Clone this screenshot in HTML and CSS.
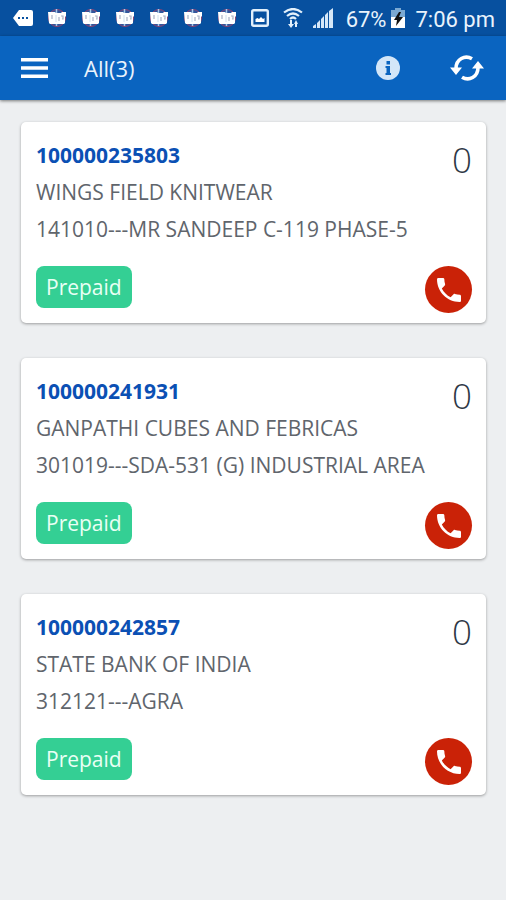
FILE: index.html
```html
<!DOCTYPE html>
<html lang="en">
<head>
<meta charset="utf-8">
<meta name="viewport" content="width=device-width, initial-scale=1">
<title>All(3)</title>
<link rel="stylesheet" href="styles.css">
</head>
<body>
<svg class="sprite" aria-hidden="true">
  <symbol id="notice" viewBox="0 0 20 20">
    <circle cx="10" cy="10" r="8.500" fill="#31569c" stroke="#94426f" stroke-width="1"/>
    <path d="M9.500 1v17" stroke="#a9c9e8" stroke-width="1.500"/>
    <path d="M1 4h7l1 1h5l1-1h4v4l-1 1v6l-1 1H3l-1-1z" fill="#fff"/>
    <path d="M5 7v4M12 9v4M14 8h2v3h-1" fill="none" stroke="#a9b2c6" stroke-width="1.200"/>
    <path d="M9 7v7" stroke="#cfe0ee" stroke-width="1"/>
  </symbol>
  <symbol id="phone" viewBox="0 0 24 24">
    <path d="M6.620 10.790c1.440 2.830 3.760 5.140 6.590 6.590l2.200-2.200c.27-.27.67-.36 1.020-.24 1.120.37 2.330.57 3.570.57.55 0 1 .45 1 1V20c0 .55-.45 1-1 1C10.610 21 3 13.390 3 4c0-.55.45-1 1-1h3.500c.55 0 1 .45 1 1 0 1.250.2 2.450.57 3.570.11.35.03.74-.25 1.020z" fill="#fff"/>
  </symbol>
</svg>
<div class="status">
  <div class="notices">
    <svg class="chat" viewBox="0 0 20 16"><path d="M6 0h12q2 0 2 2v12q0 2-2 2H6L0 8z" fill="#fff"/><path d="M5 7h2v2H5zM9 7h2v2H9zM13 7h2v2h-2z" fill="#07509f"/></svg>
    <svg class="notice"><use href="#notice"/></svg>
    <svg class="notice"><use href="#notice"/></svg>
    <svg class="notice"><use href="#notice"/></svg>
    <svg class="notice"><use href="#notice"/></svg>
    <svg class="notice"><use href="#notice"/></svg>
    <svg class="notice"><use href="#notice"/></svg>
    <svg class="image" viewBox="0 0 18 18"><rect x="1.200" y="1.200" width="15.600" height="15.600" rx="1.500" fill="none" stroke="#e3f0fb" stroke-width="2.400"/><path d="M4.500 13V10l2-1 1.500 1 2-2 2 2 1.500-1v4z" fill="#fff"/></svg>
    <svg class="wifi" viewBox="0 0 20 20"><g fill="none" stroke="#e3f0fb" stroke-width="2.200"><path d="M1 4.500q9-7 18 0M4 8q6-5 12 0M7 11q3-3 6 0"/></g><path d="M7 12h2v4h2l-3 4-3-4h2zM12 19v-3h-1l2-4 2 4h-1v3z" fill="#e3f0fb"/></svg>
    <svg class="signal" viewBox="0 0 20 20"><path d="M0 20v-2l3-2v4zM4 20v-5l3-3v8zM8 20v-9l3-3v12zM12 20V7l3-3v16zM16 20V3l4-3v20z" fill="#d5e7f8"/></svg>
  </div>
  <span class="percent">67%</span>
  <svg class="battery" viewBox="0 0 14 20"><path d="M4 0h6v2h4v7H0V2h4z" fill="#7ba9d2"/><path d="M0 9h14v11H0z" fill="#fff"/><path d="M8 4l-5 8h3l-1 6 7-9H8l2-5z" fill="#111"/></svg>
  <time class="time">7:06 pm</time>
</div>
<header class="bar">
  <button class="icon-button" aria-label="Menu"><svg class="menu" viewBox="0 0 27 20"><path d="M0 1.800h27M0 10h27M0 18.200h27" stroke="#fff" stroke-width="3.600"/></svg></button>
  <h1 class="title">All(3)</h1>
  <button class="icon-button info-button" aria-label="Information"><svg class="info" viewBox="0 0 24 24"><circle cx="12" cy="12" r="12" fill="#d3e6f8"/><path d="M10.500 5H14v3.500h-3.500zM9.500 10H14v7h1v2H9.500v-2h1v-5h-1z" fill="#0a64bf"/></svg></button>
  <button class="icon-button" aria-label="Refresh"><svg class="refresh" viewBox="0 0 34 26"><g fill="none" stroke="#fff" stroke-width="3.600"><path d="M22 3.800C15-.5 6 4 6 13.500"/><path d="M12 22.200C19 26.500 28 22 28 12.500"/></g><path d="M0 12.500h12L6 20zM22 13.500h12L28 6z" fill="#fff"/></svg></button>
</header>
<main class="list">
  <article class="card">
    <div class="details">
      <h2 class="number">100000235803</h2>
      <p class="line">WINGS FIELD KNITWEAR</p>
      <p class="line">141010---MR SANDEEP C-119 PHASE-5</p>
    </div>
    <span class="count">0</span>
    <span class="badge">Prepaid</span>
    <button class="call" aria-label="Call"><svg class="phone"><use href="#phone"/></svg></button>
  </article>
  <article class="card">
    <div class="details">
      <h2 class="number">100000241931</h2>
      <p class="line">GANPATHI CUBES AND FEBRICAS</p>
      <p class="line">301019---SDA-531 (G) INDUSTRIAL AREA</p>
    </div>
    <span class="count">0</span>
    <span class="badge">Prepaid</span>
    <button class="call" aria-label="Call"><svg class="phone"><use href="#phone"/></svg></button>
  </article>
  <article class="card">
    <div class="details">
      <h2 class="number">100000242857</h2>
      <p class="line">STATE BANK OF INDIA</p>
      <p class="line">312121---AGRA</p>
    </div>
    <span class="count">0</span>
    <span class="badge">Prepaid</span>
    <button class="call" aria-label="Call"><svg class="phone"><use href="#phone"/></svg></button>
  </article>
</main>
</body>
</html>
```
FILE: styles.css
```css
* { box-sizing: border-box; }
body {
  margin: 0;
  min-height: 100vh;
  background: #edeff1;
  color: #60656c;
  font-family: "Open Sans", "Noto Sans", sans-serif;
}
h1, h2, p { margin: 0; }
svg { display: block; flex: none; }
button { padding: 0; border: 0; background: none; cursor: pointer; }
.sprite { position: absolute; width: 0; height: 0; }

.status {
  display: flex;
  align-items: center;
  height: 36px;
  padding: 0 11px 0 13px;
  background: #07509f;
  color: #e9f3fc;
  font: 22px/36px Roboto, sans-serif;
}
.notices { display: flex; align-items: center; gap: 14px; }
.chat { width: 20px; height: 16px; }
.notice { width: 20px; height: 20px; }
.image { width: 18px; height: 18px; }
.wifi { width: 20px; height: 20px; }
.signal { width: 20px; height: 20px; margin-left: -4px; }
.percent { margin-left: auto; }
.percent, .time { padding-top: 3px; }
.battery { width: 14px; height: 20px; margin: 0 10px 0 5px; }

.bar {
  position: relative;
  display: flex;
  align-items: center;
  height: 64px;
  padding: 0 22px 0 21px;
  background: #0a64c0;
  box-shadow: 0 1px 3px rgba(0, 0, 0, 0.5);
}
.icon-button { display: flex; }
.menu { width: 27px; height: 20px; }
.title {
  flex: 1;
  margin-left: 36px;
  color: #e9f3fc;
  font-size: 22px;
  font-weight: 400;
  line-height: 32px;
}
.info { width: 24px; height: 24px; }
.info-button { margin-right: 50px; }
.refresh { width: 34px; height: 26px; }

.list { display: grid; gap: 35px; padding: 22px 20px 22px 21px; }
.card {
  display: grid;
  grid-template-columns: 1fr auto;
  row-gap: 18px;
  padding: 15px 14px 10px 15px;
  border-radius: 5px;
  background: #fff;
  box-shadow: 0 1px 3px rgba(0, 0, 0, 0.35);
}
.number {
  color: #0b50b4;
  font-size: 21px;
  font-weight: 700;
  line-height: 37px;
}
.line { font-size: 21px; font-weight: 400; line-height: 37px; }
.count {
  color: #2d3745;
  font-size: 35px;
  font-weight: 300;
  line-height: 46px;
}
.badge {
  justify-self: start;
  align-self: start;
  padding: 0 10px;
  border-radius: 8px;
  background: #34cf94;
  color: #e9fff5;
  font-size: 21px;
  line-height: 42px;
}
.count, .call { justify-self: end; }
.call {
  display: grid;
  place-items: center;
  width: 47px;
  height: 47px;
  border-radius: 50%;
  background: #ca2207;
}
.phone { width: 32px; height: 32px; }
```
